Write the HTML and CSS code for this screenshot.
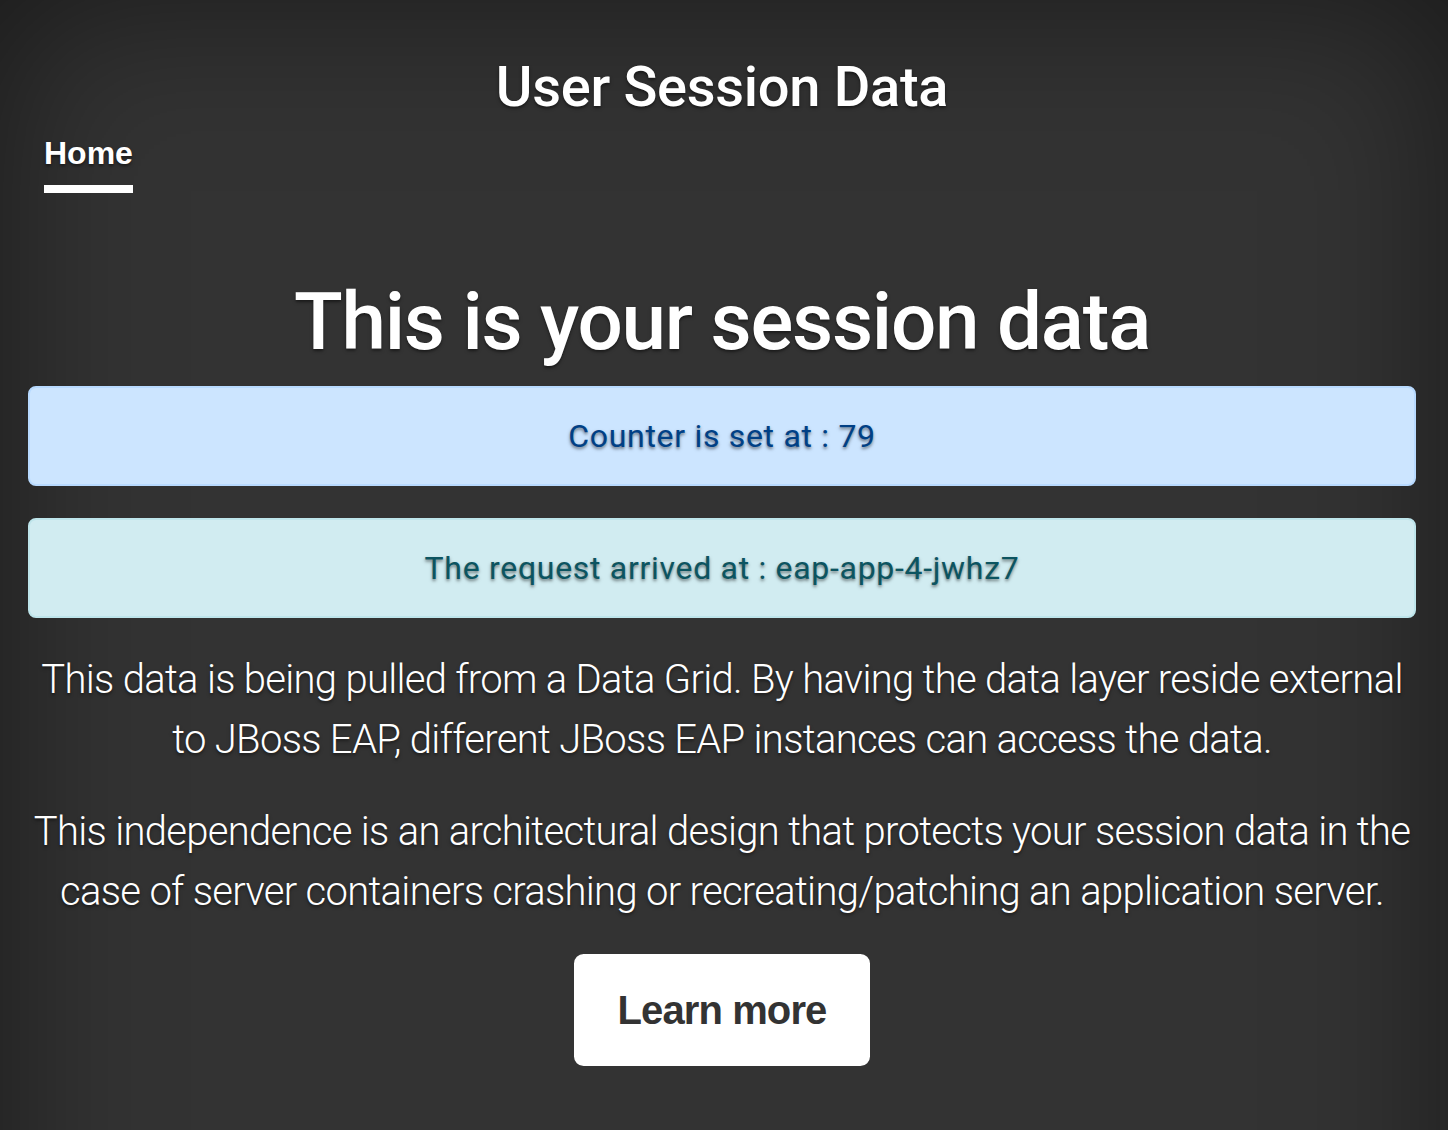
FILE: index.html
```html
<!DOCTYPE html>
<html lang="en">
<head>
<meta charset="utf-8">
<title>User Session Data</title>
<link rel="stylesheet" href="styles.css">
</head>
<body>
<div class="cover">
  <header class="masthead">
    <h3 class="brand">User Session Data</h3>
    <nav class="nav">
      <a class="nav-link active" href="#">Home</a>
    </nav>
  </header>
  <main class="inner">
    <h1 class="cover-heading">This is your session data</h1>
    <div class="alert alert-primary">Counter is set at : 79</div>
    <div class="alert alert-info">The request arrived at : eap-app-4-jwhz7</div>
    <p class="lead">This data is being pulled from a Data Grid. By having the data layer reside external to JBoss EAP, different JBoss EAP instances can access the data.</p>
    <p class="lead">This independence is an architectural design that protects your session data in the case of server containers crashing or recreating/patching an application server.</p>
    <p class="lead action"><a href="#" class="btn">Learn more</a></p>
  </main>
</div>
</body>
</html>
```
FILE: styles.css
```css
html, body {
  overflow: hidden;
}
body {
  margin: 0;
  min-height: 1400px;
  background-color: #333;
  box-shadow: inset 0 0 160px rgba(0, 0, 0, 0.5);
  color: #fff;
  font-family: "Liberation Sans", Arial, sans-serif;
  font-size: 32px;
  line-height: 1.5;
  text-shadow: 0 1.6px 3.2px rgba(0, 0, 0, 0.5);
}
.cover {
  padding: 54px 32px 0 28px;
  text-align: center;
}
.masthead {
  display: flex;
  flex-direction: column;
}
.brand {
  margin: 0;
  font-family: Roboto, Inter, sans-serif;
  font-size: 56px;
  font-weight: 500;
  line-height: 1.2;
  letter-spacing: -0.3px;
}
.nav {
  display: flex;
  padding-left: 16px;
}
.nav-link {
  display: block;
  padding: 8px 0;
  font-weight: 700;
  color: rgba(255, 255, 255, 0.5);
  text-decoration: none;
  border-bottom: 8px solid transparent;
}
.nav-link.active {
  color: #fff;
  border-bottom-color: #fff;
}
.inner {
  margin-top: 81px;
}
.cover-heading {
  margin: 0 0 16px;
  font-family: Roboto, Inter, sans-serif;
  font-size: 80px;
  font-weight: 500;
  line-height: 1.2;
  letter-spacing: -1.25px;
}
.alert {
  padding: 24px 40px;
  margin-bottom: 32px;
  border: 2px solid transparent;
  border-radius: 8px;
  font-family: Roboto, Inter, sans-serif;
  letter-spacing: 0.7px;
}
.alert-primary {
  color: #004085;
  background-color: #cce5ff;
  border-color: #b8daff;
}
.alert-info {
  color: #0c5460;
  background-color: #d1ecf1;
  border-color: #bee5eb;
}
.lead {
  margin: 0 0 32px;
  font-family: Roboto, Inter, sans-serif;
  font-size: 40px;
  font-weight: 300;
  letter-spacing: -0.7px;
}
.action {
  margin: 0;
  font-family: "Liberation Sans", Arial, sans-serif;
  letter-spacing: normal;
}
.btn {
  display: inline-block;
  padding: 24px 42px;
  font-weight: 700;
  color: #333;
  text-shadow: none;
  text-decoration: none;
  background-color: #fff;
  border: 2px solid #fff;
  border-radius: 9.6px;
  letter-spacing: -0.9px;
}
```
